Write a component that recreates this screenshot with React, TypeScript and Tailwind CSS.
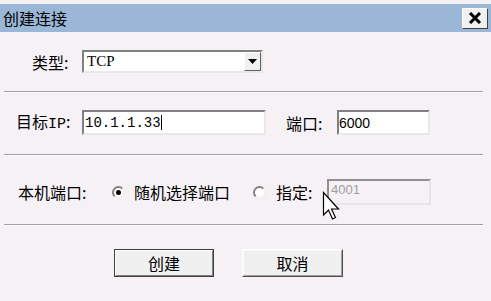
import React from 'react';

const cjk = { fontFamily: '"Noto Sans CJK SC", "Liberation Sans", sans-serif' };
const mono = { fontFamily: '"Liberation Mono", "Noto Sans CJK SC", monospace' };

const Separator = ({ className }: { className?: string }) => (
    <div className={`ml-[4px] w-[479px] border-t border-t-[#a0a0a0] border-b border-b-white ${className ?? ''}`} />
);

const Radio = ({ checked }: { checked?: boolean }) => (
    <div className="w-[13px] h-[13px] rounded-full border-2 border-t-[#808080] border-l-[#808080] border-b-[#f0f0f0] border-r-[#f0f0f0] bg-white flex items-center justify-center">
        {checked && <div className="w-[5px] h-[5px] rounded-full bg-black" />}
    </div>
);

const sunken = 'border-2 border-t-[#808080] border-l-[#808080] border-b-[#e8e8e8] border-r-[#e8e8e8]';

export default function App() {
    return (
        <div className="relative w-[491px] h-[301px] bg-[#f5f1f5] text-black overflow-hidden" style={cjk}>
            {/* title bar */}
            <div className="mt-[4px] h-[28px] bg-[#9bb7d7] flex items-center pl-[3px] pr-[3px]">
                <span className="text-[16px] leading-none">创建连接</span>
                <div className="ml-auto w-[26px] h-[21px] bg-[#f0f0f0] border border-t-white border-l-white border-b-[#404040] border-r-[#404040] flex items-center justify-center">
                    <svg width="14" height="12" viewBox="0 0 14 12">
                        <path d="M2 1 L12 11 M12 1 L2 11" stroke="#000" strokeWidth="3" />
                    </svg>
                </div>
            </div>

            {/* type */}
            <div className="mt-[18px] flex items-center pl-[32px] h-[23px]">
                <span className="w-[50px] text-[16px] leading-none">类型:</span>
                <div className={`w-[181px] h-[23px] bg-white flex items-center ${sunken}`}>
                    <span className="pl-[3px] text-[15px] leading-none" style={{ fontFamily: '"Liberation Serif", serif' }}>TCP</span>
                    <div className="ml-auto h-full w-[17px] bg-[#f0f0f0] border border-t-white border-l-white border-b-[#606060] border-r-[#606060] flex items-center justify-center">
                        <svg width="9" height="5" viewBox="0 0 9 5">
                            <path d="M0 0 H9 L4.5 5 Z" fill="#000" />
                        </svg>
                    </div>
                </div>
            </div>

            <Separator className="mt-[18px]" />

            {/* target ip */}
            <div className="mt-[17px] flex items-center pl-[16px] h-[25px]">
                <span className="w-[66px] text-[16px] leading-none whitespace-nowrap">目标<span style={mono} className="text-[15px]">IP</span>:</span>
                <div className={`w-[184px] h-[25px] bg-white flex items-center ${sunken}`}>
                    <span className="pl-[1px] text-[14px] leading-none" style={mono}>10.1.1.33</span>
                    <div className="w-px h-[15px] bg-black" />
                </div>
                <span className="ml-[20px] w-[51px] text-[16px] leading-none">端口:</span>
                <div className={`w-[93px] h-[25px] bg-white flex items-center ${sunken}`}>
                    <span className="text-[14px] leading-none" style={{ fontFamily: '"Liberation Sans", sans-serif' }}>6000</span>
                </div>
            </div>

            <Separator className="mt-[19px]" />

            {/* local port */}
            <div className="mt-[23px] flex items-center pl-[18px] h-[26px]">
                <span className="w-[94px] text-[16px] leading-none">本机端口:</span>
                <Radio checked />
                <span className="ml-[9px] w-[119px] text-[16px] leading-none">随机选择端口</span>
                <Radio />
                <span className="ml-[10px] w-[51px] text-[16px] leading-none">指定:</span>
                <div className="w-[104px] h-[26px] bg-[#f5f1f5] border-2 border-t-[#909090] border-l-[#909090] border-b-[#e8e4e8] border-r-[#e8e4e8] flex items-start">
                    <span className="pl-[2px] pt-[2px] text-[13px] leading-none text-[#a0a0a0]" style={{ fontFamily: '"Liberation Sans", sans-serif' }}>4001</span>
                </div>
            </div>

            <Separator className="mt-[19px]" />

            {/* buttons */}
            <div className="mt-[23px] flex items-center pl-[114px] gap-[28px]">
                <button className="w-[100px] h-[28px] border border-[#404040] bg-[#f0f0f0] p-0">
                    <div className="w-full h-full border border-t-white border-l-white border-b-[#808080] border-r-[#808080] flex items-center justify-center text-[16px] leading-none">
                        创建
                    </div>
                </button>
                <button className="w-[101px] h-[28px] bg-[#f0f0f0] border border-t-white border-l-white border-b-[#505050] border-r-[#505050] p-0">
                    <div className="w-full h-full border border-t-[#f8f8f8] border-l-[#f8f8f8] border-b-[#a0a0a0] border-r-[#a0a0a0] flex items-center justify-center text-[16px] leading-none">
                        取消
                    </div>
                </button>
            </div>

            {/* mouse cursor */}
            <svg className="absolute left-[322px] top-[191px]" width="18" height="30" viewBox="0 0 18 30">
                <path d="M1.5 1.5 V24 L6.5 19 L10.5 28 L13.5 26.5 L9.5 18 H16.5 Z" fill="#fff" stroke="#000" strokeWidth="1.2" strokeLinejoin="miter" />
            </svg>
        </div>
    );
}
